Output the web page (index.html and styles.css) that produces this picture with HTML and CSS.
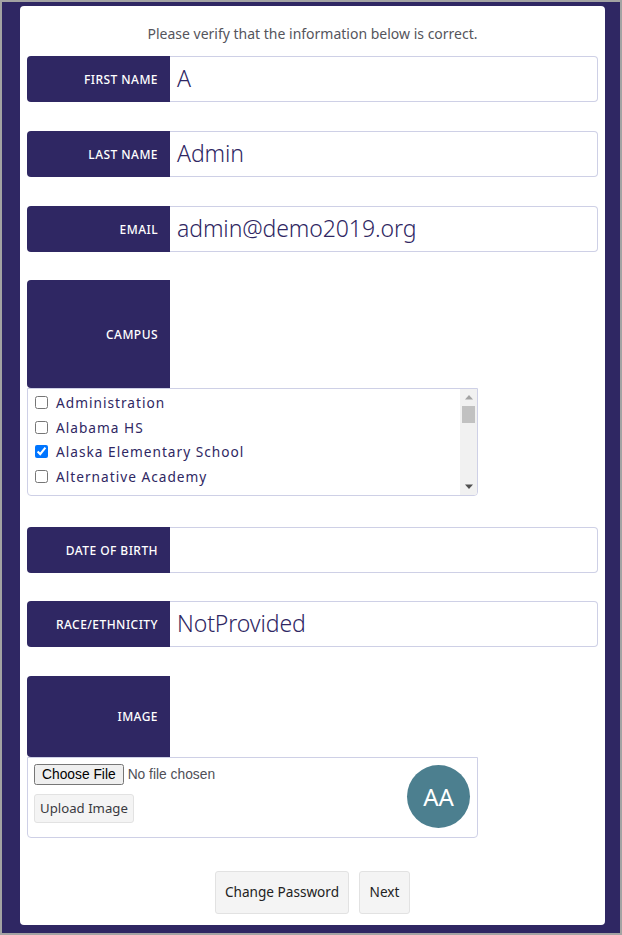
FILE: index.html
```html
<!DOCTYPE html>
<html lang="en">
<head>
<meta charset="utf-8">
<title>Verify Information</title>
<link rel="stylesheet" href="styles.css">
</head>
<body>
<div class="frame">
  <main class="card">
    <p class="intro">Please verify that the information below is correct.</p>
    <div class="group group-first"><label class="tag">First Name</label><div class="value">A</div></div>
    <div class="group group-gap"><label class="tag">Last Name</label><div class="value">Admin</div></div>
    <div class="group group-gap"><label class="tag">Email</label><div class="value">admin@demo2019.org</div></div>

    <div class="stack stack-campus">
      <label class="tag tag-campus">Campus</label>
      <div class="checklist">
        <div class="check-items">
          <label class="check"><input type="checkbox"><span>Administration</span></label>
          <label class="check"><input type="checkbox"><span>Alabama HS</span></label>
          <label class="check"><input type="checkbox" checked><span>Alaska Elementary School</span></label>
          <label class="check"><input type="checkbox"><span>Alternative Academy</span></label>
        </div>
        <div class="scrollbar">
          <div class="scroll-btn"><svg width="8" height="5" viewBox="0 0 8 5"><path d="M4 0 8 4.5H0z" fill="#a3a3a3"/></svg></div>
          <div class="scroll-thumb"></div>
          <div class="scroll-space"></div>
          <div class="scroll-btn"><svg width="8" height="5" viewBox="0 0 8 5"><path d="M0 .5H8L4 5z" fill="#505050"/></svg></div>
        </div>
      </div>
    </div>

    <div class="group group-dob"><label class="tag">Date of Birth</label><div class="value"></div></div>
    <div class="group group-race"><label class="tag">Race/Ethnicity</label><div class="value">NotProvided</div></div>

    <div class="stack stack-image">
      <label class="tag tag-image">Image</label>
      <div class="upload">
        <div class="upload-controls">
          <input class="file" type="file">
          <button class="btn btn-small" type="button">Upload Image</button>
        </div>
        <div class="avatar">AA</div>
      </div>
    </div>

    <div class="actions">
      <button class="btn btn-large btn-change" type="button">Change Password</button>
      <button class="btn btn-large btn-next" type="button">Next</button>
    </div>
  </main>
</div>
</body>
</html>
```
FILE: styles.css
```css
* { box-sizing: border-box; }
html, body { margin: 0; padding: 0; }
body {
  font-family: "Noto Sans", "Open Sans", sans-serif;
  color: #4f4f57;
}
.frame {
  width: 622px;
  height: 935px;
  background: #2f2763;
  border: 2px solid #a3a3a3;
  padding: 4px 15px 8px 18px;
}
.card {
  background: #fff;
  border-radius: 4px;
  height: 919px;
  padding: 0 7px;
  display: flex;
  flex-direction: column;
}
.intro {
  margin: 18px 0 13px;
  height: 19px;
  line-height: 19px;
  font-size: 14px;
  text-align: center;
  color: #55555c;
}
.group {
  display: flex;
  height: 46px;
  flex: none;
}
.group-first { margin-top: 0; }
.group-gap { margin-top: 29px; }
.group-dob { margin-top: 31px; }
.group-race { margin-top: 28px; }
.tag {
  flex: none;
  width: 143px;
  background: #2f2763;
  color: #fff;
  font-size: 12px;
  font-weight: 500;
  line-height: 14px;
  text-transform: uppercase;
  letter-spacing: 0.45px;
  display: flex;
  align-items: center;
  justify-content: flex-end;
  padding: 1px 12px 0 0;
  border-radius: 4px 0 0 4px;
}
.value {
  flex: 1;
  border: 1px solid #ced0e6;
  border-left: 0;
  border-radius: 0 4px 4px 0;
  padding: 0 7px;
  font-size: 23px;
  font-weight: 300;
  line-height: 42px;
  letter-spacing: -0.1px;
  color: #2f2763;
}
.stack { display: flex; flex-direction: column; flex: none; }
.stack-campus { margin-top: 28px; }
.stack-image { margin-top: 29px; }
.tag-campus { height: 108px; }
.tag-image { height: 81px; }
.checklist {
  width: 451px;
  height: 108px;
  border: 1px solid #ced0e6;
  border-radius: 0 0 4px 4px;
  overflow: hidden;
  display: flex;
}
.check-items {
  flex: 1;
  padding: 1.5px 7px;
}
.check {
  display: flex;
  align-items: center;
  height: 24.5px;
  font-size: 13.7px;
  letter-spacing: 1px;
  color: #2f2763;
}
.check input {
  margin: 0 8px 0 0;
  width: 13px;
  height: 13px;
  flex: none;
}
.scrollbar {
  flex: none;
  width: 17px;
  background: #f1f1f1;
  display: flex;
  flex-direction: column;
}
.scroll-btn {
  flex: none;
  height: 17px;
  display: flex;
  align-items: center;
  justify-content: center;
}
.scroll-thumb {
  flex: none;
  height: 17px;
  margin: 0 2px;
  background: #c1c1c1;
}
.scroll-space { flex: 1; }
.upload {
  width: 451px;
  height: 81px;
  border: 1px solid #ced0e6;
  border-radius: 0 0 4px 4px;
  padding: 7px 7px 7px 6px;
  display: flex;
  justify-content: space-between;
}
.upload-controls {
  display: flex;
  flex-direction: column;
  align-items: flex-start;
  gap: 9px;
  margin-top: -1px;
}
.file {
  font-family: "Liberation Sans", Arial, sans-serif;
  font-size: 13.8px;
  width: 220px;
  height: 21px;
}
.btn {
  font-family: inherit;
  color: #222;
  background: #f4f4f4;
  border: 1px solid #e2e2e2;
  border-radius: 3px;
  padding: 0 0 2px;
}
.btn-small { width: 100px; height: 29px; font-size: 13.2px; color: #3a3a40; }
.avatar {
  width: 63px;
  height: 63px;
  border-radius: 50%;
  background: #4c7f8f;
  color: #fff;
  font-size: 24px;
  display: flex;
  align-items: center;
  justify-content: center;
}
.actions {
  display: flex;
  justify-content: center;
  gap: 10px;
  margin-top: 33px;
}
.btn-large { height: 43px; font-size: 13.6px; }
.btn-change { width: 134px; }
.btn-next { width: 51px; }
```
